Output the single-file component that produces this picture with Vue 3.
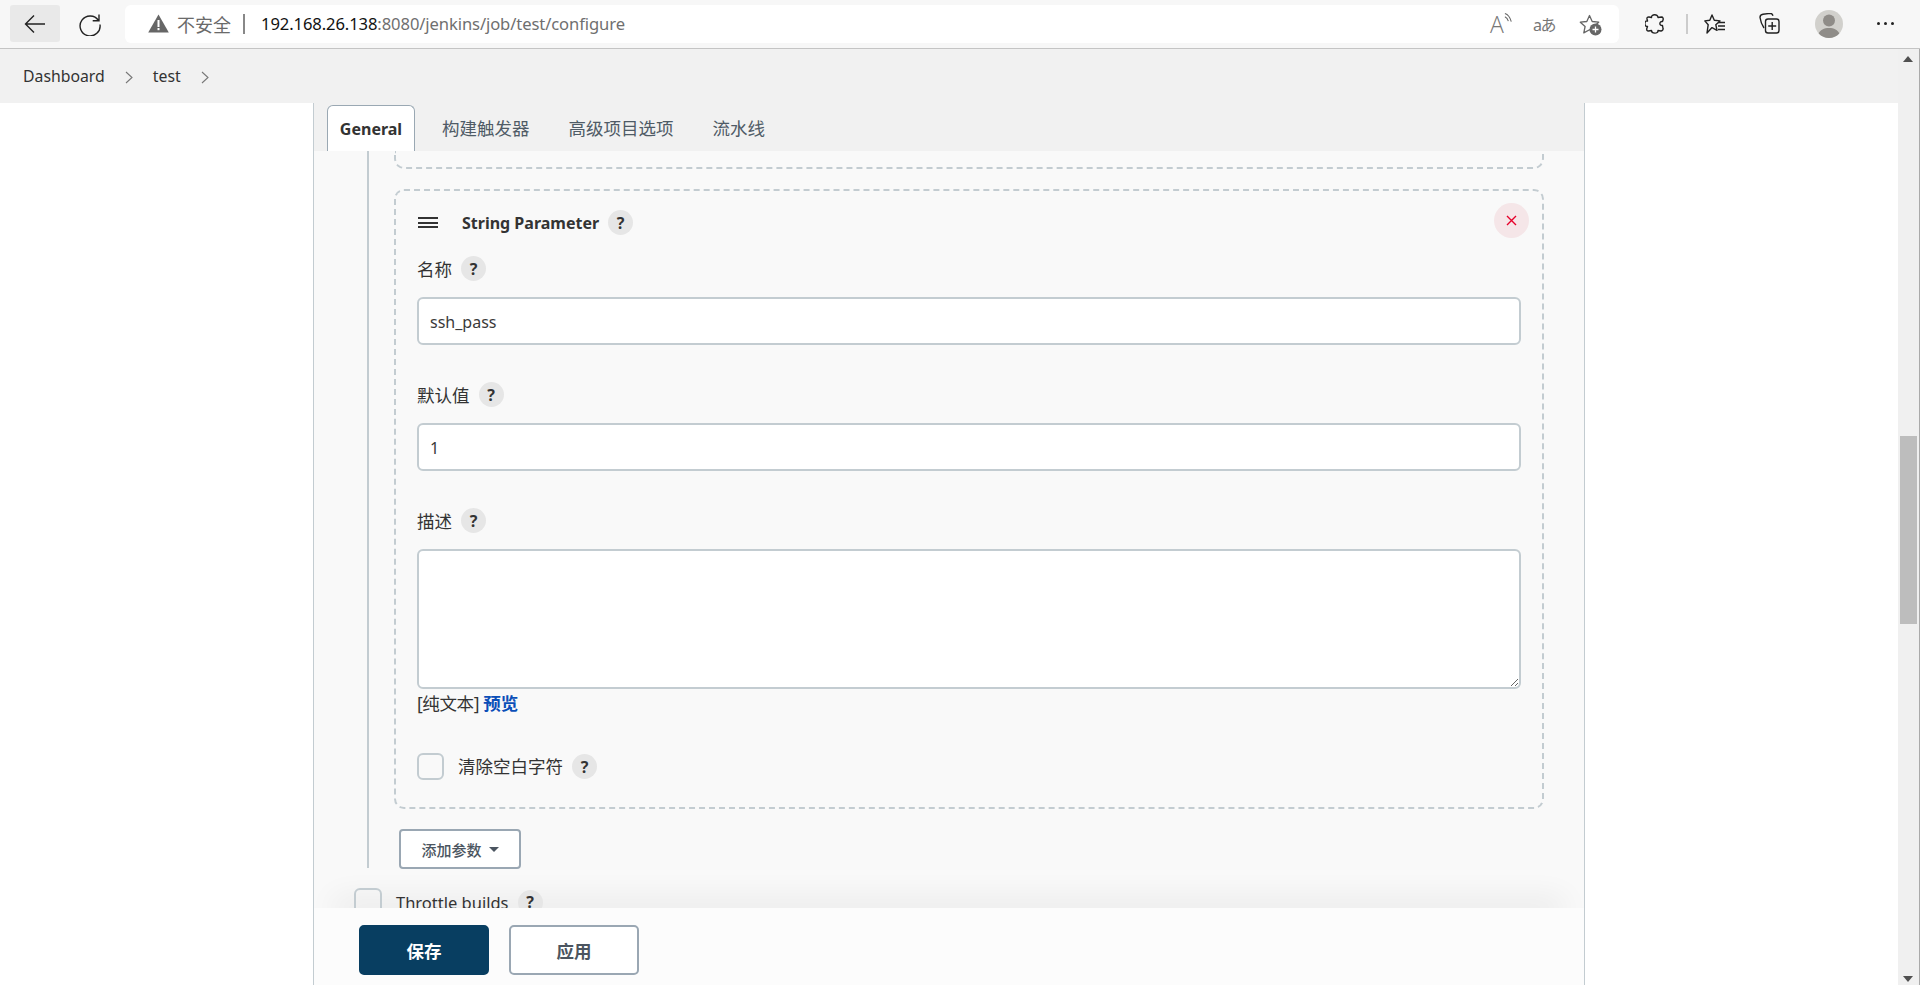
<script setup>
const fields = [
  { label: '名称', value: 'ssh_pass' },
  { label: '默认值', value: '1' },
]
const tabs = ['构建触发器', '高级项目选项', '流水线']
</script>

<template>
  <div class="app">
    <header class="chrome">
      <button class="nav back" aria-label="back">
        <svg width="22" height="20" viewBox="0 0 22 20"><path d="M21 10H2M10 1.500L1.500 10l8.500 8.500" fill="none" stroke="#222" stroke-width="1.400"/></svg>
      </button>
      <button class="nav reload" aria-label="reload">
        <svg width="24" height="24" viewBox="0 0 24 24"><path d="M20.500 8.500A10 10 0 1 0 22 12.500M21 2.500v6.300h-6.300" fill="none" stroke="#222" stroke-width="1.400"/></svg>
      </button>
      <div class="address">
        <svg class="warn" width="21" height="19" viewBox="0 0 21 19"><path d="M10.500 0.500 20.800 18.600H0.200Z" fill="#666"/><rect x="9.500" y="6" width="2" height="7" fill="#fff"/><rect x="9.500" y="14" width="2" height="2.200" fill="#fff"/></svg>
        <span class="insecure">不安全</span>
        <span class="sep"></span>
        <span class="url"><b>192.168.26.138</b>:8080/jenkins/job/test/configure</span>
        <span class="addr-right">
          <span class="read"><span class="read-a">A</span><svg width="9" height="12" viewBox="0 0 9 12"><path d="M1 1c3.200 1 5.600 3.800 7 9M1 4.500c1.800.7 3 2.200 3.800 5" fill="none" stroke="#666" stroke-width="1.200"/></svg></span>
          <span class="translate">aあ</span>
          <svg class="star-add" width="23" height="22" viewBox="0 0 23 22"><path d="M10.500 1.500l2.700 6 6.500.7-4.800 4.300 1.300 6.400-5.700-3.200-5.700 3.200 1.300-6.400L1.300 8.200l6.500-.7z" fill="none" stroke="#666" stroke-width="1.300" stroke-linejoin="round"/><circle cx="16.500" cy="15.500" r="6" fill="#666"/><path d="M16.500 12.500v6M13.500 15.500h6" stroke="#fff" stroke-width="1.300"/></svg>
        </span>
      </div>
      <div class="tools">
        <svg class="puzzle" width="20" height="22" viewBox="0 0 20 22"><path d="M6.500 4.500C6 1 13 .5 13 4.500l3.500-.5c1.500 0 2 1.500 1.500 3l-.5 1.500c-3.500-.5-3.500 4.500 0 4l.5 3c.3 1.500-1 2.500-2 2.500l-3-.5c.5 3.500-6.500 3.500-6.500 0l-3 .5c-1.500 0-2-1-1.700-2.500l.7-2c-3.500.5-3.500-6.500 0-5.500L2 6c-.3-1.500 1-2.200 2-2z" fill="none" stroke="#222" stroke-width="1.400" stroke-linejoin="round"/></svg>
        <span class="tool-sep"></span>
        <svg class="fav" width="22" height="20" viewBox="0 0 22 20"><path d="M8 1l2.300 5.300 5.700.6-4.200 3.800 1.200 5.700L8 13.600 3 19l1.200-8.300L0.800 6.900l5-.6z" fill="none" stroke="#222" stroke-width="1.400" stroke-linejoin="round"/><path d="M14 8.500h7M14 12h7M14 15.500h7" stroke="#222" stroke-width="1.400"/></svg>
        <svg class="coll" width="21" height="21" viewBox="0 0 21 21"><path d="M5 15C3 12 1.500 8 1 4.500 1 2.500 2.500 1.500 4 1.300l7-1c1.500 0 2.500.8 3 2.500" fill="none" stroke="#222" stroke-width="1.400"/><rect x="6.500" y="6" width="13.500" height="14" rx="2.500" fill="none" stroke="#222" stroke-width="1.400"/><path d="M13.200 9v8M9.200 13h8" stroke="#222" stroke-width="1.400"/></svg>
        <svg class="avatar" width="28" height="28" viewBox="0 0 28 28"><circle cx="14" cy="14" r="14" fill="#d1d0cc"/><circle cx="14" cy="10.500" r="6" fill="#8f8c88"/><path d="M3.700 23.500C5 20 9 18 14 18s9 2 10.300 5.500A14 14 0 0 1 14 28 14 14 0 0 1 3.700 23.500z" fill="#8f8c88"/></svg>
        <span class="dots"><i></i><i></i><i></i></span>
      </div>
    </header>

    <div class="window">
      <main class="viewport">
        <nav class="crumbs">
          <span class="crumb">Dashboard</span>
          <svg class="chev" width="8" height="13" viewBox="0 0 8 13"><path d="M1 1l6 5.500L1 12" fill="none" stroke="#777" stroke-width="1.100"/></svg>
          <span class="crumb">test</span>
          <svg class="chev" width="8" height="13" viewBox="0 0 8 13"><path d="M1 1l6 5.500L1 12" fill="none" stroke="#777" stroke-width="1.100"/></svg>
        </nav>
        <div class="stage">
          <section class="panel">
            <div class="tabbar">
              <div class="tab active">General</div>
              <div v-for="t in tabs" :key="t" class="tab">{{ t }}</div>
            </div>
            <div class="form">
              <div class="params">
                <div class="card-tail"></div>
                <div class="card">
                  <div class="card-head">
                    <span class="burger"><i></i><i></i><i></i></span>
                    <strong class="card-title">String Parameter</strong>
                    <span class="help">?</span>
                    <span class="spacer"></span>
                    <button class="del" aria-label="delete">
                      <svg width="11" height="11" viewBox="0 0 11 11"><path d="M1 1l9 9M10 1l-9 9" stroke="#e6002a" stroke-width="1.400"/></svg>
                    </button>
                  </div>
                  <div v-for="f in fields" :key="f.label" class="field">
                    <div class="label"><span>{{ f.label }}</span><span class="help">?</span></div>
                    <input class="input" type="text" :value="f.value" />
                  </div>
                  <div class="field">
                    <div class="label"><span>描述</span><span class="help">?</span></div>
                    <textarea class="area"></textarea>
                  </div>
                  <div class="markup">[纯文本] <a class="preview">预览</a></div>
                  <div class="check-row">
                    <input class="check" type="checkbox" />
                    <span class="check-text">清除空白字符</span>
                    <span class="help">?</span>
                  </div>
                </div>
                <button class="add">添加参数<span class="caret"></span></button>
              </div>
              <div class="throttle">
                <input class="check big" type="checkbox" />
                <span>Throttle builds</span>
                <span class="help">?</span>
              </div>
            </div>
            <div class="actions">
              <button class="btn primary">保存</button>
              <button class="btn">应用</button>
            </div>
          </section>
        </div>
      </main>
      <aside class="scrollbar">
        <span class="arrow up"></span>
        <span class="thumb"></span>
        <span class="arrow down"></span>
      </aside>
    </div>
  </div>
</template>

<style>
html, body { margin: 0; padding: 0; background: #fff; overflow: hidden; }
</style>

<style scoped>
* { box-sizing: border-box; }
.app {
  width: 1920px; height: 985px; display: flex; flex-direction: column; overflow: hidden;
  font-family: "Noto Sans", "Noto Sans CJK SC", sans-serif; color: #333; font-size: 17px;
}
button { font-family: inherit; }

.chrome {
  height: 49px; flex: none; background: #f7f7f7; border-bottom: 1px solid #c4c4c4;
  display: flex; align-items: center; padding-left: 10px; padding-bottom: 1px;
}
.nav { border: 0; background: none; padding: 0; display: flex; align-items: center; justify-content: center; }
.back { width: 50px; height: 37px; background: #e9e9e9; border-radius: 3px; }
.reload { width: 24px; height: 24px; margin-left: 18px; }
.address {
  width: 1494px; height: 38px; margin-left: 23px; background: #fff; border-radius: 6px;
  display: flex; align-items: center; padding-left: 23px;
}
.insecure { margin-left: 8px; font-size: 18px; color: #6a6a6a; }
.sep { width: 2px; height: 20px; background: #888; margin: 0 16px 0 12px; }
.url { font-size: 16.600px; color: #6f6f6f; letter-spacing: -0.100px; }
.url b { font-weight: 400; color: #111; }
.addr-right { margin-left: auto; display: flex; align-items: center; padding-right: 17px; }
.read { display: flex; align-items: flex-start; width: 22px; }
.read-a { font-size: 23px; line-height: 24px; font-weight: 300; color: #777; font-family: "Open Sans", sans-serif; }
.read svg { margin-top: 0; }
.translate { font-size: 16px; color: #777; margin-left: 21px; width: 25px; white-space: nowrap; letter-spacing: -1.500px; }
.star-add { margin-left: 21px; margin-top: 2px; }
.tools { display: flex; align-items: center; position: relative; flex: 1; height: 100%; }
.puzzle { margin-left: 26px; }
.tool-sep { width: 2px; height: 20px; background: #ccc; margin-left: 21px; }
.fav { margin-left: 16px; }
.coll { margin-left: 33px; }
.avatar { margin-left: 35px; }
.dots { display: flex; gap: 4px; margin-left: 34px; }
.dots i { width: 3px; height: 3px; background: #222; border-radius: 50%; }

.window { flex: 1; display: flex; min-height: 0; }
.viewport { flex: 1; display: flex; flex-direction: column; min-width: 0; }
.crumbs {
  height: 54px; flex: none; background: #f1f1f1; display: flex; align-items: center; padding-left: 23px;
}
.crumb { font-size: 15.800px; color: #333; }
.chev { margin: 2px 20px 0 20px; }
.stage { flex: 1; background: #fff; padding-left: 313px; padding-right: 313px; min-height: 0; }
.panel {
  position: relative; isolation: isolate; width: 1272px; height: 100%; background: #f9f9f9; overflow: hidden;
  border-left: 1px solid #c3ccd1; border-right: 1px solid #c3ccd1;
}
.tabbar {
  height: 48px; background: #f1f1f1; display: flex; align-items: flex-end; padding: 0 0 0 13px;
}
.tab { height: 46px; padding: 0 14px; margin-right: 11px; display: flex; align-items: center; font-size: 17.500px; color: #4f5b66; padding-bottom: 2px; }
.tab.active {
  width: 88px; padding: 0; justify-content: center; background: #fff; color: #333; font-weight: 700; font-size: 16px;
  border: 1px solid #9aa8b3; border-bottom: 0; border-radius: 6px 6px 0 0; margin-right: 13px;
}
.form { padding: 0 40px 0 40px; }
.params { margin-left: 13px; border-left: 2px solid #c3ccd1; padding-left: 25px; height: 717px; }
.card-tail {
  height: 18px; border: 2px dashed #c3ccd1; border-top: 0; border-radius: 0 0 10px 10px;
}
.card {
  margin-top: 20px; height: 620px; border: 2px dashed #c3ccd1; border-radius: 10px; padding: 19px 21px 0 21px;
}
.card-head { display: flex; align-items: center; height: 25px; }
.burger { display: flex; flex-direction: column; gap: 2.500px; width: 20px; margin-left: 1px; }
.burger i { height: 2px; background: #333; display: block; }
.card-title { margin-left: 24px; font-size: 16px; font-weight: 700; color: #333; }
.help {
  width: 25px; height: 25px; border-radius: 50%; background: #e6e6e6; color: #333; font-size: 16px; font-weight: 700;
  display: inline-flex; align-items: center; justify-content: center; margin-left: 9px; flex: none;
}
.spacer { flex: 1; }
.del {
  width: 35px; height: 35px; border: 0; border-radius: 50%; background: #f5e6e8; padding: 0; margin: 0 -8px 0 0;
  display: flex; align-items: center; justify-content: center; transform: translateY(-2px); flex: none;
}
.field { margin-top: 21px; }
.field + .field { margin-top: 37px; }
.label { display: flex; align-items: center; height: 25px; font-size: 17.500px; color: #333; }
.input {
  display: block; width: 100%; height: 48px; margin-top: 16px; border: 2px solid #c3ccd1; border-radius: 6px;
  background: #fff; padding: 2px 11px 0; font: inherit; font-size: 16px; color: #3a3a3a; outline: none;
}
.area {
  display: block; width: 100%; height: 140px; margin-top: 16px; border: 2px solid #c3ccd1; border-radius: 6px;
  background: #fff; resize: vertical; outline: none;
}
.markup { margin-top: 4px; line-height: 20px; font-size: 17.500px; color: #333; letter-spacing: -0.400px; }
.preview { color: #0b4fb8; font-weight: 700; letter-spacing: 0; }
.check-row { display: flex; align-items: center; margin-top: 40px; height: 27px; font-size: 17.500px; }
.check-text { margin-bottom: 3px; }
.check {
  appearance: none; margin: 0 14px 0 0; width: 27px; height: 27px; background: transparent; flex: none;
  border: 2px solid #c3ccd1; border-radius: 6px;
}
.check.big { width: 28px; height: 28px; margin-right: 14px; }
.add {
  display: flex; align-items: center; justify-content: center; margin: 20px 0 0 5px; width: 122px; height: 40px;
  border: 2px solid #9aa7b3; border-radius: 4px; background: #fff; color: #4b5560; font-size: 15px; font-weight: 500; padding: 0;
}
.caret { margin-left: 7px; border: 5px solid transparent; border-top: 5px solid #4b5560; border-bottom: 0; }
.throttle { display: flex; align-items: center; height: 28px; margin-top: 20px; font-size: 16.500px; }
.actions {
  position: absolute; left: 0; right: 0; bottom: 0; height: 77px; background: #fcfcfc; display: flex; gap: 20px;
  padding: 17px 0 0 45px;
}
.actions::before {
  content: ""; position: absolute; left: 30px; right: 30px; top: 0; height: 1px;
  box-shadow: 0 0 30px 10px rgba(0, 0, 0, .07); z-index: -1;
}
.btn {
  width: 130px; height: 50px; border: 2px solid #9aa7b3; border-radius: 5px; background: #fff; color: #4b5560;
  font-size: 17.500px; font-weight: 700; padding: 0;
}
.btn.primary { background: #083e61; border-color: #083e61; color: #fff; }

.scrollbar {
  width: 22px; flex: none; background: #f0f0f0; border-right: 1px solid #aaa; position: relative;
  display: flex; flex-direction: column; align-items: center;
}
.thumb { position: absolute; left: 2px; width: 17px; top: 387px; height: 188px; background: #bdbdbd; }
.arrow { position: absolute; left: 5px; border: 5px solid transparent; }
.arrow.up { top: 7px; border-top: 0; border-bottom: 6px solid #505050; }
.arrow.down { bottom: 3px; border-bottom: 0; border-top: 6px solid #505050; }
</style>
